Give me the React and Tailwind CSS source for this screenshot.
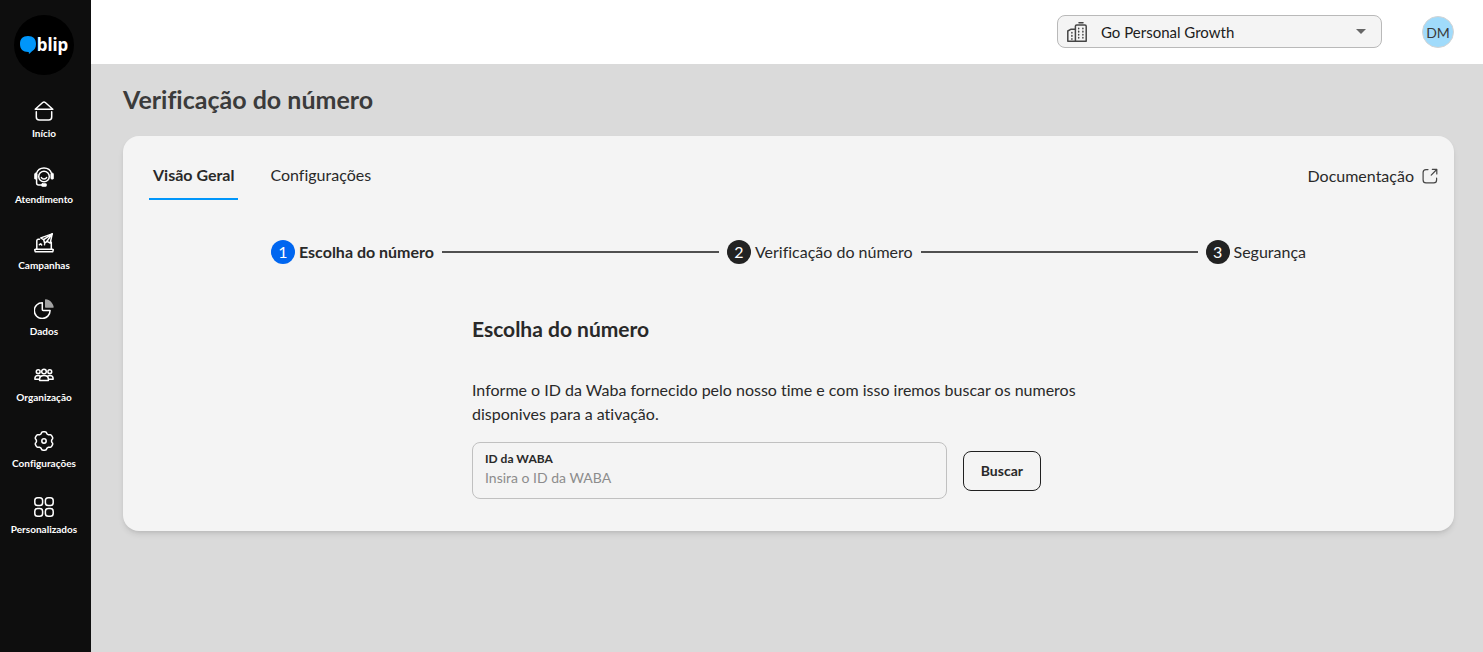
import React, { useState } from 'react';

function HomeIcon() {
  return (
    <svg width="20" height="20" viewBox="0 0 20 20" fill="none" stroke="currentColor" strokeWidth="1.5" strokeLinecap="round" strokeLinejoin="round">
      <path d="M1.2 8.3 8.7 1.5c.8-.7 1.8-.7 2.6 0l7.5 6.8Z" />
      <path d="M2.3 10.8v5.2c0 1.8 1.2 3 3 3h9.400c1.8 0 3-1.2 3-3v-5.200" />
    </svg>
  );
}

function HeadsetIcon() {
  return (
    <svg width="20" height="20" viewBox="0 0 20 20" fill="none" stroke="currentColor" strokeWidth="1.5" strokeLinecap="round" strokeLinejoin="round">
      <path d="M2.4 6.6C3.4 3.300 6.300 1 10 1s6.600 2.300 7.600 5.600" />
      <circle cx="10" cy="9.500" r="5.300" />
      <path d="M7.400 10.500c.4 1 1.400 1.500 2.600 1.500s2.200-.5 2.600-1.500" />
      <rect x=".4" y="6.200" width="2.800" height="6" rx="1.200" fill="currentColor" strokeWidth=".6" />
      <rect x="16.800" y="6.200" width="2.800" height="6" rx="1.200" fill="currentColor" strokeWidth=".6" />
      <path d="M2.600 12v4c0 1.200.8 2 2 2h3" />
      <rect x="7.500" y="16.500" width="5" height="3" rx="1" fill="currentColor" strokeWidth=".6" />
    </svg>
  );
}

function CampaignIcon() {
  return (
    <svg width="20" height="20" viewBox="0 0 20 20" fill="none" stroke="currentColor" strokeWidth="1.5" strokeLinecap="round" strokeLinejoin="round">
      <path d="M5.500 6.300H4.200c-.8 0-1.400.6-1.400 1.400v8.500M17.300 9.300v6.900" />
      <path d="M1.400 16.300h17.200c.5 0 .7.300.6.700l-.3 1.200c-.1.400-.4.600-.8.600H1.900c-.4 0-.7-.2-.8-.6L.8 17c-.1-.4.1-.7.6-.7Z" />
      <path d="m18.200.9-11.400 4 2.900 1.800 1 3.500 2.300-1.900 3.200 1.900Z" />
      <path d="m18.200.9-8.500 5.800M18.200.9 13 8.300" />
      <path d="m5.400 11.700 1.300-.9 1 1.100M10.500 11.700h.1" />
    </svg>
  );
}

function PieIcon() {
  return (
    <svg width="20" height="20" viewBox="0 0 20 20" fill="none">
      <path d="M8.300 3.700v6.900c0 .5.400.9.900.9h6.900a7.900 7.900 0 1 1-7.800-7.800Z" stroke="currentColor" strokeWidth="1.500" strokeLinejoin="round" />
      <path d="M11 .8c0-.5.300-.7.800-.6 3.900.4 7.300 3.700 7.900 7.800.1.500-.2.800-.6.800H11.700c-.4 0-.7-.3-.7-.7Z" fill="#a3a3a3" />
    </svg>
  );
}

function PeopleIcon() {
  return (
    <svg width="20" height="20" viewBox="0 0 20 20" fill="none" stroke="currentColor" strokeWidth="1.500" strokeLinecap="round" strokeLinejoin="round">
      <circle cx="10" cy="6.500" r="2.300" />
      <circle cx="4.200" cy="6.700" r="1.900" />
      <circle cx="15.800" cy="6.700" r="1.900" />
      <path d="M5.600 15.600v-1.300c0-2.300 1.900-3.700 4.400-3.700s4.400 1.400 4.400 3.700v1.300Z" />
      <path d="M5.200 14.300H.9v-.6c0-2 1.400-3.200 3.300-3.200.8 0 1.500.2 2 .6M14.800 14.300h4.300v-.6c0-2-1.400-3.200-3.300-3.200-.8 0-1.500.2-2 .6" />
    </svg>
  );
}

// six blunt teeth around the centre
const gearPoints = Array.from({ length: 72 }, (_, i) => {
  const angle = (i * Math.PI) / 36;
  const r = 8.4 - 0.9 * Math.tanh(2.2 * (Math.cos(6 * angle) - 0.3));
  return `${(10 + r * Math.cos(angle)).toFixed(2)},${(10 + r * Math.sin(angle)).toFixed(2)}`;
}).join(' ');

function GearIcon() {
  return (
    <svg width="20" height="20" viewBox="0 0 20 20" fill="none" stroke="currentColor" strokeWidth="1.500" strokeLinejoin="round">
      <polygon points={gearPoints} />
      <circle cx="10" cy="10" r="2.200" />
    </svg>
  );
}

function GridIcon() {
  return (
    <svg width="20" height="20" viewBox="0 0 20 20" fill="none" stroke="currentColor" strokeWidth="1.500">
      <rect x=".8" y=".8" width="7.800" height="7.800" rx="2.800" />
      <rect x="11.400" y=".8" width="7.800" height="7.800" rx="2.800" />
      <rect x=".8" y="11.400" width="7.800" height="7.800" rx="2.800" />
      <rect x="11.400" y="11.400" width="7.800" height="7.800" rx="2.800" />
    </svg>
  );
}

function BuildingIcon() {
  return (
    <svg width="20" height="20" viewBox="0 0 20 20" fill="none" stroke="#454545" strokeWidth="1.500" strokeLinecap="round" strokeLinejoin="round" className="shrink-0">
      <path d="M8.400 19.200V4.200c0-.8.500-1.300 1.300-1.300h8.200c.8 0 1.300.5 1.300 1.300v15Z" />
      <path d="M8.400 7.300H3.700L.8 9v10.200h7.600M12 .8h4" />
      <path d="M11.700 6.200v.6M15.900 6.200v.6M11.700 9.300v.6M15.900 9.300v.6M11.700 12.400v.6M15.900 12.400v.6M11.700 15.500v.6M15.900 15.500v.6M4.900 10.500v.6M4.900 13.600v.6M4.900 16.700v.6" />
    </svg>
  );
}

function ExternalIcon() {
  return (
    <svg width="16" height="16" viewBox="0 0 16 16" fill="none" stroke="#454545" strokeWidth="1.200" strokeLinecap="round" strokeLinejoin="round">
      <path d="M6 1.600H4A2.900 2.900 0 0 0 1.100 4.500v7.400A2.900 2.900 0 0 0 4 14.800h7.700a2.900 2.900 0 0 0 2.900-2.900V10" />
      <path d="m9.200 7.100 5.500-5.600M10.300 1.300h4.500V6" />
    </svg>
  );
}

const menuItems = [
  { label: 'Início', icon: HomeIcon },
  { label: 'Atendimento', icon: HeadsetIcon },
  { label: 'Campanhas', icon: CampaignIcon },
  { label: 'Dados', icon: PieIcon },
  { label: 'Organização', icon: PeopleIcon },
  { label: 'Configurações', icon: GearIcon },
  { label: 'Personalizados', icon: GridIcon },
];

const steps = ['Escolha do número', 'Verificação do número', 'Segurança'];

function Sidebar() {
  return (
    <aside className="w-[91px] shrink-0 bg-[#0e0e0e] text-white pt-[15px] pr-[3px] flex flex-col items-center">
      <a href="#" aria-label="blip" className="size-15 rounded-full bg-black flex items-center justify-center gap-px">
        <svg width="16" height="18" viewBox="0 0 16 18" fill="#0096fa" className="shrink-0">
          <path d="M8 0c5.300 0 8 2.700 8 8 0 3.900-1.500 6-4 7.200L9.600 17.600c-.4.400-.8.200-.8-.3V16C3 16.200 0 13.300 0 8 0 2.700 2.700 0 8 0Z" />
        </svg>
        <span className="font-['Noto_Sans',sans-serif] font-bold text-[17px] leading-5">blip</span>
      </a>
      <nav className="mt-[26px] flex flex-col items-center gap-7">
        {menuItems.map(({ label, icon: Icon }) => (
          <a key={label} href="#" className="flex flex-col items-center gap-1.5">
            <Icon />
            <span className="text-[10px] leading-3 font-bold">{label}</span>
          </a>
        ))}
      </nav>
    </aside>
  );
}

function Header() {
  return (
    <header className="h-16 bg-white flex items-center justify-end gap-10 pr-[29px]">
      <div className="w-[325px] h-[33px] mb-px rounded-lg border border-[#b9b9b9] bg-[#f4f4f4] flex items-center pl-[9px] pr-[15px]">
        <BuildingIcon />
        <select aria-label="Contrato" className="appearance-none flex-1 min-w-0 ml-3.5 bg-transparent text-[15px] leading-5 text-[#202020] outline-none">
          <option>Go Personal Growth</option>
        </select>
        <svg width="10" height="5" viewBox="0 0 10 5" fill="#666666">
          <path d="M0 0h10L5 5Z" />
        </svg>
      </div>
      <button type="button" className="size-8 rounded-full border border-[#d4d4d4] bg-[#a0dbfb] text-[14px] text-[#3b3b3b] flex items-center justify-center">
        DM
      </button>
    </header>
  );
}

function Stepper() {
  return (
    <ol className="mt-10 px-[148px] flex items-center text-[16px] leading-6">
      {steps.map((step, i) => (
        <React.Fragment key={step}>
          {i > 0 && <li aria-hidden="true" className="flex-1 h-0.5 mx-2 bg-[#505050]" />}
          <li className="flex items-center gap-1">
            <span className={`size-6 rounded-full text-white flex items-center justify-center ${i === 0 ? 'bg-[#0066f0]' : 'bg-[#222222]'}`}>
              {i + 1}
            </span>
            <span className={i === 0 ? 'font-bold' : ''}>{step}</span>
          </li>
        </React.Fragment>
      ))}
    </ol>
  );
}

export default function App() {
  const [tab, setTab] = useState('Visão Geral');
  const [wabaId, setWabaId] = useState('');

  return (
    <div className="min-h-screen flex bg-[#dadada] text-[#292929] font-['Lato','Open_Sans',sans-serif] [font-variant-ligatures:none]">
      <Sidebar />
      <div className="flex-1 min-w-0">
        <Header />
        <main className="pt-5 pl-8 pr-[29px]">
          <h1 className="text-[25px] leading-[30px] font-bold text-[#3b3b3b]">Verificação do número</h1>

          <section className="mt-[22px] pt-4 pb-8 rounded-2xl bg-[#f4f4f4] shadow-md">
            <div className="pl-[26px] pr-4 flex items-center justify-between text-[16px] leading-6">
              <div role="tablist" className="flex gap-7">
                {['Visão Geral', 'Configurações'].map((name) => (
                  <button
                    key={name}
                    type="button"
                    role="tab"
                    aria-selected={tab === name}
                    onClick={() => setTab(name)}
                    className={`h-12 px-1 border-b-2 cursor-pointer ${tab === name ? 'font-bold border-[#0096fa]' : 'border-transparent'}`}
                  >
                    {name}
                  </button>
                ))}
              </div>
              <a href="#" className="flex items-center gap-2">
                Documentação
                <ExternalIcon />
              </a>
            </div>

            <Stepper />

            <form className="mt-13 w-[633px] max-w-full mx-auto" onSubmit={(e) => e.preventDefault()}>
              <h2 className="text-[21px] leading-[26px] font-bold">Escolha do número</h2>
              <p className="mt-9 text-[16px] leading-6">
                Informe o ID da Waba fornecido pelo nosso time e com isso iremos buscar os numeros disponives para a ativação.
              </p>
              <div className="mt-4 flex items-center gap-4">
                <div className="w-3/4 h-[57px] px-3 pt-2 rounded-lg border border-[#c0c0c0]">
                  <label htmlFor="waba" className="block text-[12px] leading-4 font-bold">ID da WABA</label>
                  <input
                    id="waba"
                    type="text"
                    placeholder="Insira o ID da WABA"
                    className="block w-full text-[14px] leading-[22px] outline-none placeholder:text-[#8c8c8c]"
                    value={wabaId}
                    onChange={(e) => setWabaId(e.target.value)}
                  />
                </div>
                <button type="submit" className="h-10 px-[17px] rounded-lg border border-[#202020] text-[14px] font-bold cursor-pointer">
                  Buscar
                </button>
              </div>
            </form>
          </section>
        </main>
      </div>
    </div>
  );
}
